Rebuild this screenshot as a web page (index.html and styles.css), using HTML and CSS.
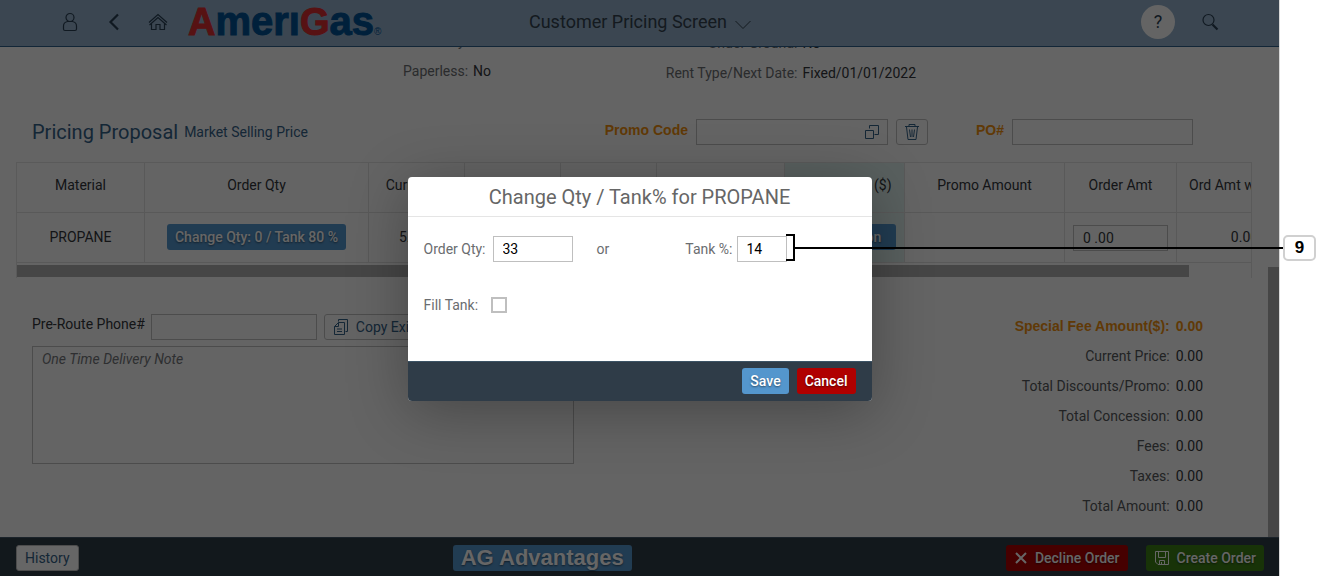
FILE: index.html
```html
<!DOCTYPE html>
<html lang="en">
<head>
<meta charset="utf-8">
<title>Customer Pricing Screen</title>
<link rel="stylesheet" href="styles.css">
</head>
<body>
<div class="page">
<div class="app">
  <header class="shell">
    <div class="shell-side">
      <button class="icon-btn" aria-label="User"><svg width="16" height="20" viewBox="0 0 16 20"><circle cx="8" cy="5.500" r="4"/><path d="M5.500 9.500 C3 10 1.500 11.500 1.500 14 V17 Q1.500 18.500 3 18.500 H13 Q14.500 18.500 14.500 17 V14 C14.500 11.500 13 10 10.500 9.500 Z"/></svg></button>
      <button class="icon-btn" aria-label="Back"><svg class="bold" width="16" height="20" viewBox="0 0 16 20"><path d="M12 2.500 L4.500 10 L12 17.500"/></svg></button>
      <button class="icon-btn" aria-label="Home"><svg width="20" height="18" viewBox="0 0 20 18"><path d="M1 9.500 L10 1.500 L19 9.500 M1.500 12 L10 4.500 L18.500 12 M3.500 10.500 V16.500 H8 V11.500 H12 V16.500 H16.500 V10.500"/></svg></button>
      <div class="logo"><span class="logo-cap">A</span>merı<span class="logo-cap">G</span>as<small>®</small></div>
    </div>
    <button class="shell-title">Customer Pricing Screen <svg width="16" height="10" viewBox="0 0 16 10"><path d="M0.500 1 L8 8.500 L15.500 1"/></svg></button>
    <div class="shell-side shell-end">
      <button class="help" aria-label="Help">?</button>
      <button class="icon-btn" aria-label="Search"><svg width="18" height="18" viewBox="0 0 18 18"><circle cx="7.500" cy="7" r="5.500"/><path class="handle" d="M11.500 11.500 L16.500 16.500"/></svg></button>
    </div>
  </header>

  <main class="content">
    <section class="info">
      <dl class="info-left">
        <dt>Delivery:</dt><dd></dd>
        <dt>Paperless:</dt><dd>No</dd>
      </dl>
      <dl class="info-right">
        <dt>Under Ground:</dt><dd>No</dd>
        <dt>Rent Type/Next Date:</dt><dd>Fixed/01/01/2022</dd>
      </dl>
    </section>

    <section class="proposal">
      <h2>Pricing Proposal</h2>
      <span class="subtitle">Market Selling Price</span>
      <div class="codes">
        <label for="promo">Promo Code</label>
        <div class="value-help"><input id="promo" type="text"><svg width="16" height="16" viewBox="0 0 16 16"><path d="M5.500 4.500 V1.500 H14.500 V10.500 H10.500 M1.500 6.500 H9.500 V14.500 H1.500 Z"/></svg></div>
        <button class="btn trash" aria-label="Delete promo code"><svg width="16" height="18" viewBox="0 0 16 18"><path d="M1 3.500 H15 M5 3 V1.500 H11 V3 M2.500 4 L4 16.500 H12 L13.500 4 M5.500 6.500 L6.500 14 M8 6.500 V14 M10.500 6.500 L9.500 14"/></svg></button>
        <label for="po" class="po-label">PO#</label>
        <input id="po" class="po" type="text">
      </div>
    </section>

    <div class="table-wrap">
      <table>
        <colgroup><col class="w128"><col class="w224"><col class="w96"><col class="w96"><col class="w96"><col class="w128"><col class="w120"><col class="w160"><col class="w112"><col class="w136"></colgroup>
        <thead><tr><th>Material</th><th>Order Qty</th><th>Curr Price</th><th></th><th></th><th></th><th class="tint">Concession ($)</th><th>Promo Amount</th><th>Order Amt</th><th>Ord Amt w Promo</th></tr></thead>
        <tbody><tr><td>PROPANE</td><td><button class="btn blue">Change Qty: 0 / Tank 80 %</button></td><td>5.000</td><td></td><td></td><td></td><td class="tint"><button class="btn blue wide">Concession</button></td><td></td><td class="amount"><input type="text" value="0 .00" aria-label="Order Amt"></td><td>0.00</td></tr></tbody>
      </table>
      <div class="hscroll"></div>
    </div>

    <section class="lower">
      <div class="notes">
        <div class="phone-row">
          <label for="phone">Pre-Route Phone#</label>
          <input id="phone" type="text">
          <button class="btn copy"><svg width="16" height="18" viewBox="0 0 16 18"><path d="M5.500 3.500 V1.500 H14.500 V13.500 H12.500 M1.500 8.500 L5.500 4.500 H11.500 V16.500 H1.500 Z M1.500 8.500 H5.500 V4.500 M4 11 H9 M4 13.500 H9"/></svg>Copy Existing</button>
        </div>
        <textarea placeholder="One Time Delivery Note" aria-label="One Time Delivery Note"></textarea>
      </div>
      <dl class="totals">
        <dt class="fee">Special Fee Amount($):</dt><dd class="fee">0.00</dd>
        <dt>Current Price:</dt><dd>0.00</dd>
        <dt>Total Discounts/Promo:</dt><dd>0.00</dd>
        <dt>Total Concession:</dt><dd>0.00</dd>
        <dt>Fees:</dt><dd>0.00</dd>
        <dt>Taxes:</dt><dd>0.00</dd>
        <dt>Total Amount:</dt><dd>0.00</dd>
      </dl>
    </section>
    <div class="vscroll"></div>
  </main>

  <footer class="actions">
    <button class="btn">History</button>
    <button class="btn blue advantages">AG Advantages</button>
    <div class="order-actions">
      <button class="btn red"><svg class="x" width="14" height="14" viewBox="0 0 14 14"><path d="M2 2 L12 12 M12 2 L2 12"/></svg>Decline Order</button>
      <button class="btn green"><svg width="16" height="16" viewBox="0 0 16 16"><path d="M1.500 1.500 H14.500 V14.500 H4 L1.500 12 Z M4.500 1.500 V7.500 H11.500 V1.500 M5.500 14.500 V10.500 H10.500 V14.500 M7.500 12 V14"/></svg>Create Order</button>
    </div>
  </footer>

  <div class="overlay">
    <div class="dialog" role="dialog" aria-labelledby="dlg-title">
      <h1 id="dlg-title">Change Qty / Tank% for PROPANE</h1>
      <div class="dialog-body">
        <div class="fields">
          <label for="qty" class="qty-label">Order Qty:</label><input id="qty" class="qty" type="text" value="33">
          <span class="or">or</span>
          <label for="tank">Tank %:</label><input id="tank" class="tank" type="text" value="14">
        </div>
        <div class="fill"><label for="fill">Fill Tank:</label><input id="fill" type="checkbox"></div>
      </div>
      <div class="dialog-foot"><button class="btn blue">Save</button><button class="btn red">Cancel</button></div>
    </div>
  </div>
</div>
<div class="callout"><span class="bracket"></span><span class="line"></span><span class="number">9</span></div>
</div>
</body>
</html>
```

FILE: styles.css
```css
* { box-sizing: border-box; }
body { margin: 0; background: #fff; font-family: Roboto, "Liberation Sans", sans-serif; font-size: 14px; line-height: 20px; color: #32363a; }
button, input, textarea { font: inherit; color: inherit; margin: 0; }
h1, h2, dl, dd { margin: 0; font-weight: 400; }
svg { fill: none; stroke: currentColor; stroke-width: 1; flex: none; }

.page { position: relative; display: flex; min-height: 100vh; padding-right: 43px; }
.app { position: relative; flex: 1; min-width: 0; display: flex; flex-direction: column; background: #fafafa; border-right: 1px solid #d8d8d8; }

/* Shell header */
.shell { display: flex; align-items: center; height: 47px; padding-bottom: 2px; background: #93b0ca; border-bottom: 1px solid #2d5f8b; color: #2a3f54; }
.shell-side { flex: 1; display: flex; align-items: center; padding-left: 48px; }
.shell-end { justify-content: flex-end; padding: 0 47px 0 0; gap: 13px; }
.icon-btn { width: 44px; height: 44px; padding: 0; border: 0; background: none; display: grid; place-items: center; }
.icon-btn svg { stroke-width: 1.2; }
.icon-btn .bold, .icon-btn .handle { stroke-width: 2.2; }
.logo { margin: 9px 0 0 8px; display: flex; align-items: baseline; font: bold 40px/44px "Liberation Sans", Arial, sans-serif; color: #005294; -webkit-text-stroke: 1px #005294; }
.logo-cap { font-size: 38px; color: #d92d31; -webkit-text-stroke: 1px #d92d31; }
.logo small { font-size: 10px; font-weight: 400; -webkit-text-stroke: 0; }
.shell-title { display: flex; align-items: center; gap: 8px; padding: 0; border: 0; background: none; font-size: 18px; line-height: 24px; color: #32414f; }
.shell-title svg { margin-top: 5px; }
.help { width: 34px; height: 34px; padding: 0; border: 0; border-radius: 50%; background: #fafafa; font-size: 18px; }

/* Scrolled content */
.content { position: relative; flex: 1; overflow: hidden; }
.info { display: grid; grid-template-columns: 50% 50%; margin-top: -21px; }
.info dl { display: grid; grid-auto-rows: 30px; column-gap: 5px; align-items: center; }
.info-left { grid-template-columns: 73.2% 1fr; }
.info-right { grid-template-columns: 158px 1fr; padding-top: 2px; }
.info dt { text-align: right; color: #6a6d70; }

.proposal { display: flex; align-items: center; margin-top: 31px; padding: 0 86px 0 32px; }
.proposal h2 { font-size: 20px; line-height: 24px; color: #346187; }
.subtitle { margin-left: 6px; color: #346187; }
.codes { margin-left: auto; display: flex; align-items: center; gap: 8px; }
.codes label { padding-bottom: 4px; font-family: "Liberation Sans", Arial, sans-serif; font-weight: 700; color: #f0900f; }
.codes .po-label { margin-left: 40px; }
input[type="text"] { height: 26px; padding: 0 9px; border: 1px solid #bfbfbf; border-radius: 0; background: transparent; }
.value-help { position: relative; width: 192px; display: flex; }
.value-help input { width: 100%; }
.value-help svg { position: absolute; right: 8px; top: 5px; color: #346187; }
.po { width: 181px; }

.btn { display: inline-flex; align-items: center; justify-content: center; gap: 7px; height: 26px; padding: 0 8px; border: 1px solid #bfbfbf; border-radius: 3px; background: #fff; color: #346187; white-space: nowrap; }
.codes .btn, .copy { background: transparent; }
.trash { width: 32px; }
.blue, .red, .green { border: 0; color: #fff; font-weight: 500; text-shadow: 0 1px 2px rgba(0, 0, 0, .5); }
.blue { background: #5496cd; }
.red { background: #b00000; }
.green { background: #3c8016; }
.wide { width: 102px; }

.table-wrap { margin: 17px 27px 0 16px; padding-bottom: 1px; border: 1px solid #e0e0e0; border-bottom: 0; overflow: hidden; }
table { width: 1296px; table-layout: fixed; border-collapse: separate; border-spacing: 0; }
.w96 { width: 96px; }
.w112 { width: 112px; }
.w120 { width: 120px; }
.w128 { width: 128px; }
.w136 { width: 136px; }
.w160 { width: 160px; }
.w224 { width: 224px; }
th, td { height: 50px; padding: 0 0 2px; border-right: 1px solid #dedede; border-bottom: 1px solid #dedede; font-weight: 400; text-align: center; }
th { padding-bottom: 6px; }
.tint { background: #dff0ee; }
td .btn { vertical-align: middle; }
.amount { padding: 0 8px; text-align: left; }
.amount input { width: 95px; }
.hscroll { width: 95%; height: 12px; margin-top: 2px; background: #b0b0b0; }

.lower { display: flex; justify-content: space-between; margin-top: 32px; padding: 0 76px 0 32px; }
.notes { width: 542px; padding-top: 4px; }
.phone-row { display: flex; align-items: flex-start; gap: 7px; }
.phone-row label { margin-right: -1px; }
.phone-row input { width: 166px; }
textarea { display: block; width: 100%; height: 118px; margin-top: 6px; padding: 2px 9px; border: 1px solid #bfbfbf; background: transparent; resize: none; }
textarea::placeholder { color: #74777a; font-style: italic; }
.totals { display: grid; grid-template-columns: auto auto; grid-auto-rows: 30px; column-gap: 6px; padding-top: 1px; line-height: 30px; text-align: right; }
.totals dt { color: #55585b; }
.totals .fee { font-family: "Liberation Sans", Arial, sans-serif; font-weight: 700; color: #f0900f; }
.vscroll { position: absolute; right: 0; top: 220px; bottom: 0; width: 11px; background: #b0b0b0; }

.actions { display: flex; align-items: center; justify-content: space-between; height: 39px; padding: 2px 15px 0 16px; background: #2f3c48; border-top: 1px solid #44586a; }
.order-actions { display: flex; gap: 18px; }
.advantages { font-family: "Liberation Sans", Arial, sans-serif; font-size: 22px; font-weight: 700; }
.x { stroke-width: 2; }

/* Dialog */
.overlay { position: absolute; inset: 0; padding-top: 2px; display: grid; place-items: center; background: rgba(0, 0, 0, .6); }
.dialog { width: 464px; border-radius: 4px; overflow: hidden; background: #fff; box-shadow: 0 10px 60px rgba(0, 0, 0, .3); }
.dialog h1 { height: 40px; border-bottom: 1px solid #e5e5e5; font-size: 20px; line-height: 40px; text-align: center; color: #666; }
.dialog-body { height: 144px; padding: 19px 16px; color: #6a6d70; }
.dialog-body input { color: #000; }
.fields { display: flex; align-items: center; }
.qty-label { width: 65px; }
.qty { width: 80px; margin-left: 4px; }
.or { margin: 0 auto 0 24px; }
.tank { width: 50px; margin: 0 69px 0 4px; }
.fill { display: flex; align-items: center; gap: 13px; margin-top: 33px; }
.fill input { appearance: none; width: 16px; height: 16px; border: 2px solid #bfbfbf; background: #fff; }
.dialog-foot { display: flex; justify-content: flex-end; align-items: center; gap: 8px; height: 40px; padding: 0 16px 2px; background: #2f3c48; border-top: 1px solid #3c5365; }

/* Numbered callout over the page */
.callout { position: absolute; top: 234px; left: calc(50% + 124px); right: 7px; display: flex; align-items: center; }
.bracket { width: 9px; height: 27px; border: 2px solid #000; border-left: 0; }
.line { flex: 1; height: 2px; background: #000; }
.number { width: 33px; height: 26px; border: 2px solid #d0d0d0; border-radius: 5px; background: #fff; color: #000; font: bold 17px/22px "Liberation Sans", Arial, sans-serif; text-align: center; }
```
